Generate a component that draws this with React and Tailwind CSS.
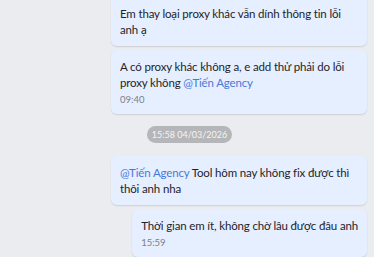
const FONT = { fontFamily: 'Lato, "Noto Sans", sans-serif' };

function Mention({ children }) {
  return <span className="text-[#4a78d8]">{children}</span>;
}

function Bubble({ children, time, className = '' }) {
  return (
    <div
      className={`rounded-[6px] bg-[#e5efff] px-[9px] pt-[9px] pb-[8px] text-[11.5px] leading-[16px] tracking-[-0.15px] text-[#1f2329] shadow-[0_1px_1.5px_rgba(0,0,0,0.12)] ${className}`}
    >
      <div>{children}</div>
      {time && <div className="mt-[3px] text-[9.5px] leading-[12px] tracking-normal text-[#7b8089]">{time}</div>}
    </div>
  );
}

export default function App() {
  return (
    <div className="h-[257px] w-[374px] overflow-hidden bg-[#ebecf0]" style={FONT}>
      <div className="flex flex-col items-end pr-[7px]">
        <Bubble className="-mt-[12px] w-[256px] pt-[18px] pb-[7px]">
          Em thay loại proxy khác vẫn dính thông tin lỗi anh ạ
        </Bubble>
        <Bubble className="mt-[4px] w-[256px]" time="09:40">
          A có proxy khác không a, e add thử phải do lỗi proxy không <Mention>@Tiến Agency</Mention>
        </Bubble>
        <div className="flex w-full justify-center pl-[12px] pt-[12px] pb-[13px]">
          <span className="rounded-full bg-[#b5b6b9] px-[5px] text-[9px] leading-[17px] text-[#f4f4f5]">
            15:58 04/03/2026
          </span>
        </div>
        <Bubble className="w-[256px]">
          <Mention>@Tiến Agency</Mention> Tool hôm nay không fix được thì thôi anh nha
        </Bubble>
        <Bubble className="mt-[4px] whitespace-nowrap" time="15:59">
          Thời gian em ít, không chờ lâu được đâu anh
        </Bubble>
      </div>
    </div>
  );
}
